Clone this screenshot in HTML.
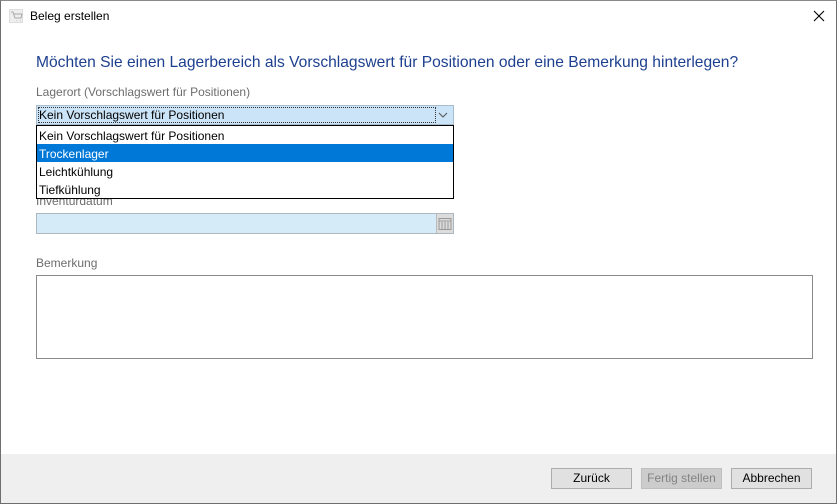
<!DOCTYPE html>
<html><head><meta charset="utf-8"><style>
*{margin:0;padding:0;box-sizing:border-box}
body{width:837px;height:504px;position:relative;background:#fff;font-family:"Liberation Sans",sans-serif;font-size:12px;overflow:hidden}
.win{position:absolute;left:0;top:0;width:837px;height:504px;border:1px solid #6e6e6e;border-top-color:#8a8a8a}
.abs{position:absolute}
.lbl{color:#6d6d6d;font-size:12px}
</style></head><body>
<div class="win"></div>
<div class="abs" style="left:9px;top:9px;width:14px;height:14px;background:#eee;border:1px solid #ddd"></div>
<svg class="abs" style="left:10px;top:11px" width="13" height="11" viewBox="0 0 13 11"><path d="M1 1h2l2 6h6l1-4H4M6 9.5h.5M10 9.5h.5" stroke="#aaa" fill="none"/></svg>
<div class="abs" style="left:30px;top:9px;font-size:12px;color:#000">Beleg erstellen</div>
<svg class="abs" style="left:813px;top:10px" width="12" height="12"><path d="M1 1L11 11M11 1L1 11" stroke="#000" stroke-width="1.1"/></svg>

<div class="abs" style="left:36px;top:54px;font-size:15.6px;color:#1d3f8f">Möchten Sie einen Lagerbereich als Vorschlagswert für Positionen oder eine Bemerkung hinterlegen?</div>
<div class="abs lbl" style="left:36px;top:85px">Lagerort (Vorschlagswert für Positionen)</div>

<div class="abs" style="left:36px;top:105px;width:418px;height:20px;background:#cce4f7;border:1px solid #a9bccc"></div>
<div class="abs" style="left:38px;top:107px;width:398px;height:16px;border:1px dotted #333"></div>
<div class="abs" style="left:39px;top:108px;font-size:12px;color:#000">Kein Vorschlagswert für Positionen</div>
<svg class="abs" style="left:438px;top:112px" width="10" height="6"><path d="M1 1l4 4 4-4" stroke="#555" fill="none"/></svg>

<div class="abs lbl" style="left:36px;top:194px">Inventurdatum</div>
<div class="abs" style="left:36px;top:213px;width:418px;height:21px;background:#d6ebf8;border:1px solid #adb7c0"></div>
<div class="abs" style="left:436px;top:214px;width:17px;height:19px;background:#dcdcdc;border-left:1px solid #bbb"></div>
<svg class="abs" style="left:438px;top:217px" width="14" height="13"><rect x="1" y="1.5" width="12" height="11" fill="none" stroke="#999"/><path d="M1 4h12M4 5v7M7 5v7M10 5v7" stroke="#999"/></svg>

<div class="abs" style="left:36px;top:125px;width:418px;height:74px;background:#fff;border:1px solid #000"></div>
<div class="abs" style="left:37px;top:144px;width:416px;height:18px;background:#0078d7"></div>
<div class="abs" style="left:39px;top:129px;color:#000">Kein Vorschlagswert für Positionen</div>
<div class="abs" style="left:39px;top:147px;color:#fff">Trockenlager</div>
<div class="abs" style="left:39px;top:165px;color:#000">Leichtkühlung</div>
<div class="abs" style="left:39px;top:183px;color:#000">Tiefkühlung</div>

<div class="abs lbl" style="left:36px;top:256px">Bemerkung</div>
<div class="abs" style="left:36px;top:275px;width:777px;height:84px;border:1px solid #8a8a8a"></div>

<div class="abs" style="left:1px;top:454px;width:835px;height:49px;background:#efefef"></div>
<div class="abs" style="left:551px;top:468px;width:81px;height:21px;background:#e1e1e1;border:1px solid #adadad;text-align:center;line-height:19px;color:#000">Zurück</div>
<div class="abs" style="left:641px;top:468px;width:81px;height:21px;background:#cccccc;border:1px solid #bfbfbf;text-align:center;line-height:19px;color:#838383">Fertig stellen</div>
<div class="abs" style="left:731px;top:468px;width:81px;height:21px;background:#e1e1e1;border:1px solid #adadad;text-align:center;line-height:19px;color:#000">Abbrechen</div>
</body></html>
